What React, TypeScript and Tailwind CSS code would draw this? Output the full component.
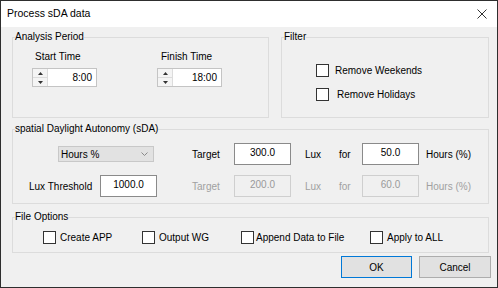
import { ReactNode } from "react";

function Group({ title, className, children }: { title: string; className: string; children: ReactNode }) {
  return (
    <fieldset className={`border border-[#dcdcdc] p-0 ${className}`}>
      <legend className="ml-[2px] px-0 leading-[12px] text-black">{title}</legend>
      {children}
    </fieldset>
  );
}

function Check({ label, gap = "ml-[4px]" }: { label: string; gap?: string }) {
  return (
    <label className="flex items-center">
      <span className="h-[13px] w-[13px] shrink-0 border border-[#333333] bg-white" />
      <span className={`${gap} whitespace-nowrap leading-[13px]`}>{label}</span>
    </label>
  );
}

function Spinner({ value }: { value: string }) {
  return (
    <div className="flex h-[19px] w-[65px] border border-[#c4c4c4] bg-white">
      <div className="flex w-[15px] flex-col border-r border-[#dcdcdc]">
        <div className="flex flex-1 items-center justify-center border-b border-[#dcdcdc] bg-[#f4f4f4]">
          <svg width="5" height="3" viewBox="0 0 5 3">
            <path d="M2.5 0 L5 3 L0 3 Z" fill="#333" />
          </svg>
        </div>
        <div className="flex flex-1 items-center justify-center bg-[#f4f4f4]">
          <svg width="5" height="3" viewBox="0 0 5 3">
            <path d="M0 0 L5 0 L2.5 3 Z" fill="#333" />
          </svg>
        </div>
      </div>
      <div className="flex flex-1 items-center justify-end pr-[4px]">{value}</div>
    </div>
  );
}

function Field({ value, disabled = false }: { value: string; disabled?: boolean }) {
  return (
    <div
      className={`flex h-[22px] w-[57px] shrink-0 justify-center pt-[3px] leading-[12px] ${
        disabled ? "border border-[#cfcfcf] bg-[#f0f0f0] text-[#9a9a9a]" : "border border-[#8a8a8a] bg-white text-black"
      }`}
    >
      {value}
    </div>
  );
}

function Row({ first, value, target, hours, disabled = false }: { first: ReactNode; value: string; target: string; hours: string; disabled?: boolean }) {
  const dim = disabled ? "text-[#a0a0a0]" : "text-black";
  return (
    <div className="flex h-[22px] items-center">
      <div className="flex w-[167px] items-center">{first}</div>
      <div className={`w-[54px] pl-[12px] ${dim}`}>Target</div>
      <Field value={value} disabled={disabled} />
      <div className={`flex w-[71px] pl-[14px] ${dim}`}>
        <span className="w-[34px]">Lux</span>
        <span>for</span>
      </div>
      <Field value={target} disabled={disabled} />
      <div className={`ml-[7px] whitespace-nowrap ${dim}`}>{hours}</div>
    </div>
  );
}

export default function App() {
  return (
    <div className="flex h-[288px] w-[498px] flex-col border border-[#2e2e2e] bg-[#f0f0f0] font-['Liberation_Sans',Arial,sans-serif] text-[10px] text-black">
      <div className="flex h-[26px] items-center justify-between bg-white pl-[6px] pr-[10px]">
        <span className="text-[10.5px]">Process sDA data</span>
        <svg width="10" height="10" viewBox="0 0 10 10">
          <path d="M0.5 0.5 L9.5 9.5 M9.5 0.5 L0.5 9.5" stroke="#333" strokeWidth="1" />
        </svg>
      </div>

      <div className="flex flex-1 flex-col pl-[11px] pr-[6px] pt-[4px]">
        <div className="flex">
          <Group title="Analysis Period" className="h-[87px] w-[257px]">
            <div className="flex pl-[19px] pt-[8px]">
              <div className="flex flex-col">
                <span className="mb-[5px] ml-[3px] leading-[12px]">Start Time</span>
                <Spinner value="8:00" />
              </div>
              <div className="ml-[60px] flex flex-col">
                <span className="mb-[5px] ml-[4px] leading-[12px]">Finish Time</span>
                <Spinner value="18:00" />
              </div>
            </div>
          </Group>
          <Group title="Filter" className="ml-[12px] h-[87px] w-[208px]">
            <div className="flex flex-col gap-[11px] pl-[34px] pt-[21px]">
              <Check label="Remove Weekends" gap="ml-[6px]" />
              <Check label="Remove Holidays" gap="ml-[8px]" />
            </div>
          </Group>
        </div>

        <Group title="spatial Daylight Autonomy (sDA)" className="mt-[5px] h-[81px] w-[477px]">
          <div className="flex flex-col gap-[10px] pt-[8px]">
            <Row
              first={
                <div className="ml-[45px] flex h-[16px] w-[96px] items-center justify-between border border-[#c8c8c8] bg-[#e2e2e2] pl-[2px] pr-[5px]">
                  <span>Hours %</span>
                  <svg width="7" height="4" viewBox="0 0 7 4">
                    <path d="M0.5 0.5 L3.5 3.5 L6.5 0.5" stroke="#8a8a8a" strokeWidth="1" fill="none" />
                  </svg>
                </div>
              }
              value="300.0"
              target="50.0"
              hours="Hours (%)"
            />
            <Row
              first={
                <>
                  <span className="w-[87px] shrink-0 whitespace-nowrap pl-[16px]">Lux Threshold</span>
                  <Field value="1000.0" />
                </>
              }
              value="200.0"
              target="60.0"
              hours="Hours (%)"
              disabled
            />
          </div>
        </Group>

        <Group title="File Options" className="mt-[7px] h-[42px] w-[477px]">
          <div className="flex pl-[30px] pt-[8px]">
            <div className="w-[99px]">
              <Check label="Create APP" />
            </div>
            <div className="w-[99px]">
              <Check label="Output WG" />
            </div>
            <div className="w-[129px]">
              <Check label="Append Data to File" gap="ml-[2px]" />
            </div>
            <Check label="Apply to ALL" />
          </div>
        </Group>

        <div className="mt-[3px] flex justify-end gap-[7px]">
          <button className="h-[22px] w-[71px] border border-[#0078d7] bg-[#e1e1e1]">OK</button>
          <button className="h-[22px] w-[72px] border border-[#adadad] bg-[#e1e1e1]">Cancel</button>
        </div>
      </div>
    </div>
  );
}
